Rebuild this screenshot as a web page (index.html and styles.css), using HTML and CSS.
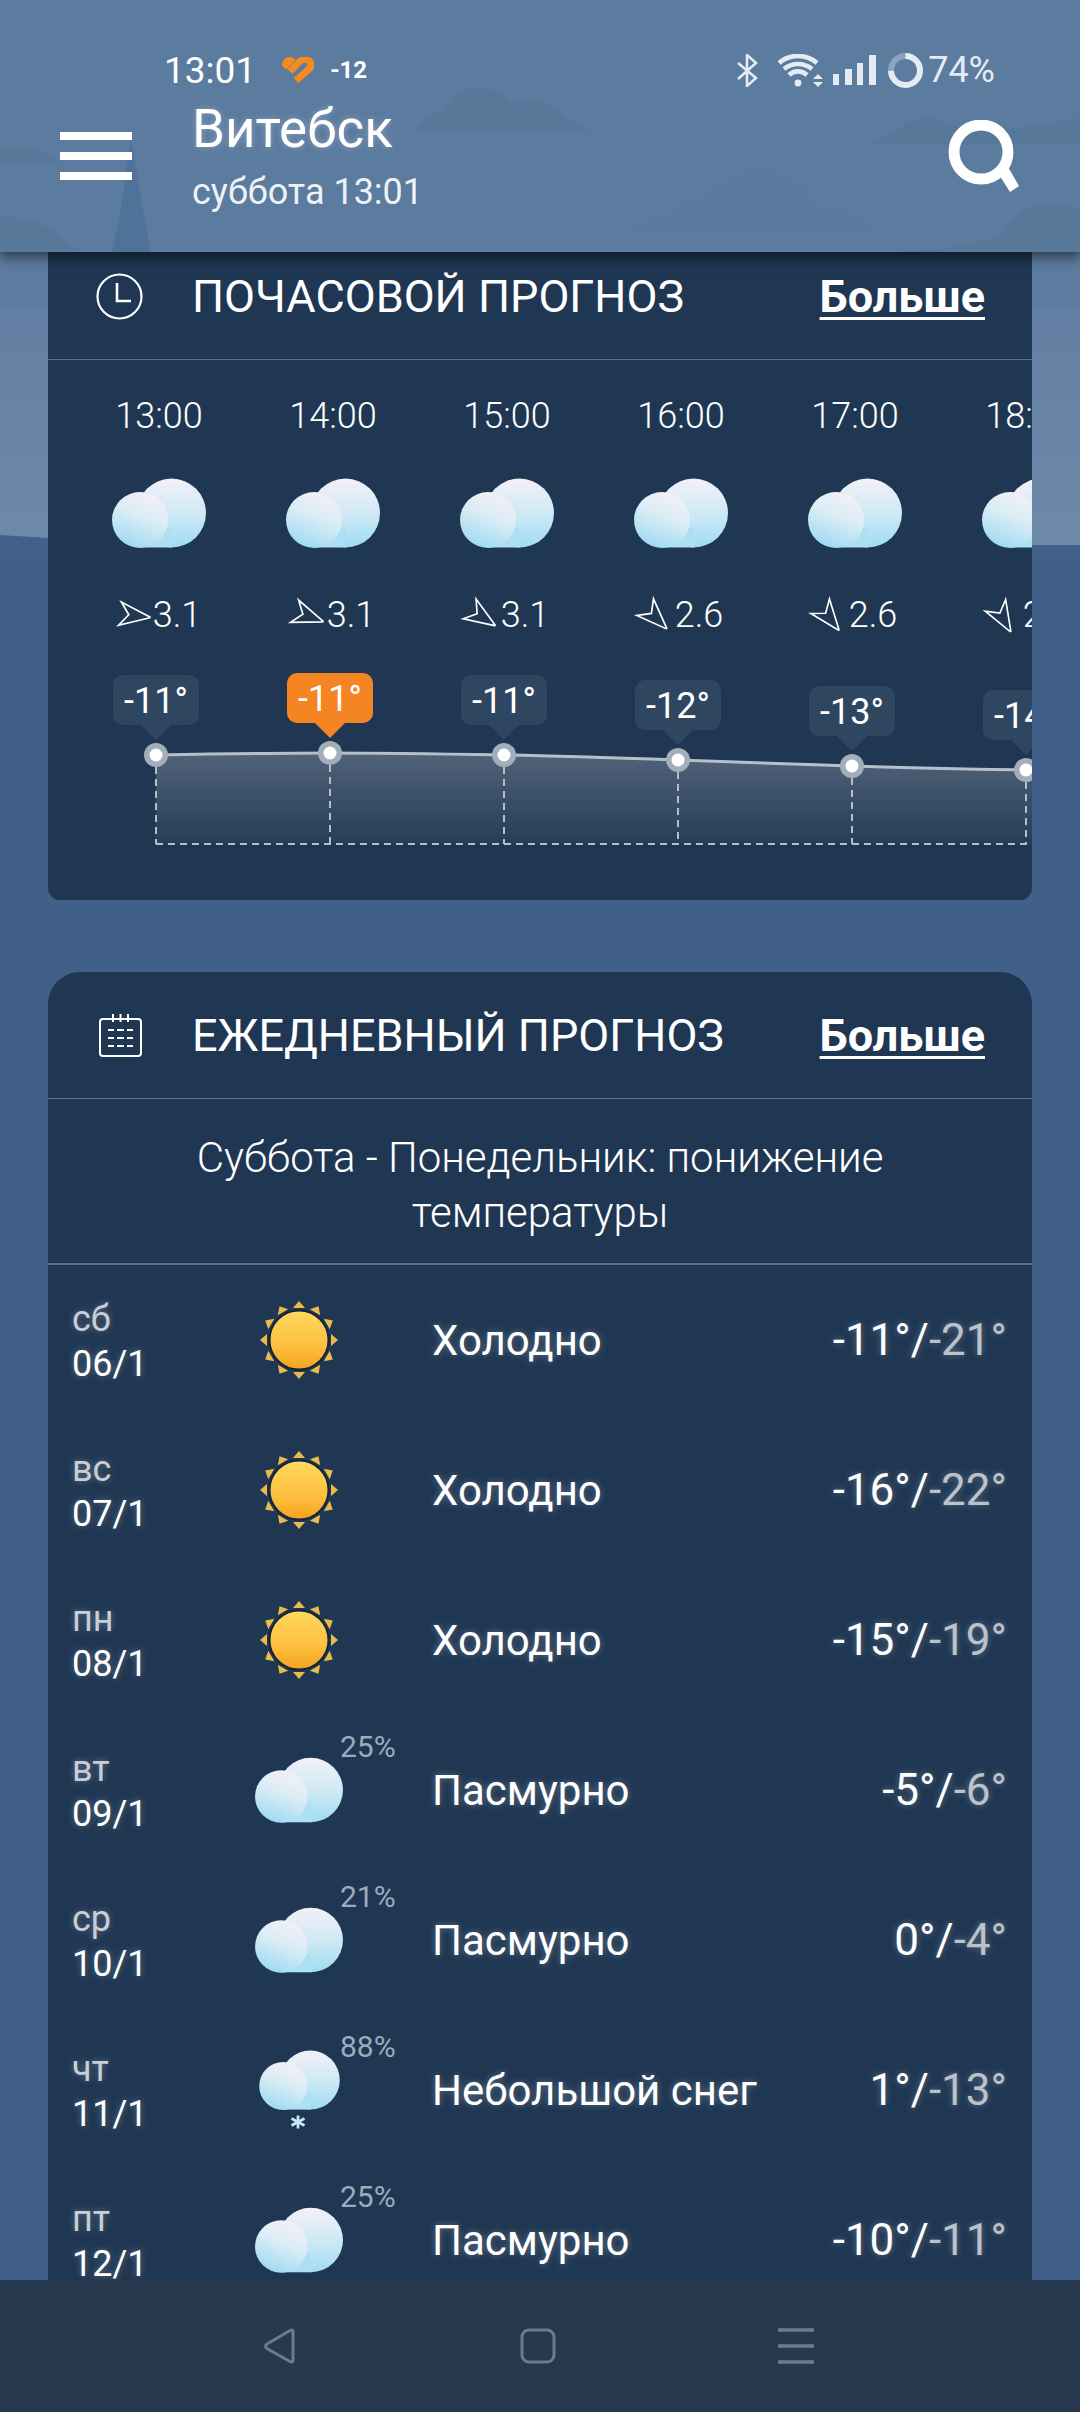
FILE: index.html
```html
<!DOCTYPE html>
<html lang="ru">
  <head>
    <meta charset="UTF-8" />
    <meta name="viewport" content="width=device-width, initial-scale=1.0" />
    <title>Витебск - прогноз</title>
    <link rel="stylesheet" href="styles.css">
  </head>
  <body>
    <svg class="svg-defs" aria-hidden="true">
      <defs>
        <linearGradient id="cloudBack" x1="0" y1="0" x2="0" y2="1">
          <stop offset="0" stop-color="#f2f1f8" />
          <stop offset="0.5" stop-color="#d0e9f5" />
          <stop offset="1" stop-color="#9fdcf2" />
        </linearGradient>
        <linearGradient id="cloudFront" x1="0.7" y1="0" x2="0.3" y2="1">
          <stop offset="0" stop-color="#f5f0f6" />
          <stop offset="0.45" stop-color="#d9ecf5" />
          <stop offset="1" stop-color="#9cdaf1" />
        </linearGradient>
        <linearGradient id="sunDisc" x1="0" y1="0" x2="0" y2="1">
          <stop offset="0" stop-color="#ffd95e" />
          <stop offset="0.6" stop-color="#fdbf3f" />
          <stop offset="1" stop-color="#f5a21f" />
        </linearGradient>
        <linearGradient id="chartFill" x1="0" y1="0" x2="0" y2="1">
          <stop offset="0" stop-color="#ffffff" stop-opacity="0.22" />
          <stop offset="1" stop-color="#ffffff" stop-opacity="0.03" />
        </linearGradient>
        <linearGradient id="skyLow" x1="0" y1="0" x2="0" y2="1">
          <stop offset="0" stop-color="#627fa3" />
          <stop offset="1" stop-color="#6f89a9" />
        </linearGradient>
        <symbol id="cloud" viewBox="0 0 94 70">
          <circle cx="59.5" cy="35" r="34.5" fill="url(#cloudBack)" />
          <rect x="28" y="50" width="32" height="19.5" fill="#aee0f3" />
          <circle cx="28" cy="42" r="28" fill="url(#cloudFront)" />
        </symbol>
        <symbol id="sun" viewBox="0 0 80 80">
          <g fill="#e9bb4c">
            <polygon points="40,1 46,8 34,8" />
            <polygon points="40,1 46,8 34,8" transform="rotate(30 40 40)" />
            <polygon points="40,1 46,8 34,8" transform="rotate(60 40 40)" />
            <polygon points="40,1 46,8 34,8" transform="rotate(90 40 40)" />
            <polygon points="40,1 46,8 34,8" transform="rotate(120 40 40)" />
            <polygon points="40,1 46,8 34,8" transform="rotate(150 40 40)" />
            <polygon points="40,1 46,8 34,8" transform="rotate(180 40 40)" />
            <polygon points="40,1 46,8 34,8" transform="rotate(210 40 40)" />
            <polygon points="40,1 46,8 34,8" transform="rotate(240 40 40)" />
            <polygon points="40,1 46,8 34,8" transform="rotate(270 40 40)" />
            <polygon points="40,1 46,8 34,8" transform="rotate(300 40 40)" />
            <polygon points="40,1 46,8 34,8" transform="rotate(330 40 40)" />
          </g>
          <circle cx="40" cy="40" r="29.5" fill="url(#sunDisc)" stroke="#14253a" stroke-width="2" />
        </symbol>
        <symbol id="wind" viewBox="-18 -18 36 36">
          <polygon points="18,0 -10,-10.6 -2,0 -10,10.6" fill="none" stroke="#fff" stroke-width="1.5" stroke-linejoin="miter" />
        </symbol>
      </defs>
    </svg>

    <div class="app">
      <svg class="scenery" viewBox="0 0 1080 560" aria-hidden="true">
        <rect width="1080" height="252" fill="#5b7b9f" />
        <rect y="252" width="1080" height="55" fill="#5c7b9e" />
        <rect y="307" width="1080" height="240" fill="url(#skyLow)" />
        <path d="M0 535 L48 538 L1030 545 L1080 545 V560 H0 Z" fill="#41608a" />
        <path d="M413 133 Q428 112 445 112 Q452 88 478 88 Q500 88 510 104 Q540 92 565 116 L590 133 Z" fill="#587899" />
        <path d="M627 230 L672 215 Q685 195 705 200 Q730 172 762 172 Q800 172 815 208 Q850 210 875 230 Z" fill="#5a799c" />
        <path d="M860 145 Q885 140 900 128 Q915 113 940 120 Q960 128 985 132 Q1040 125 1080 118 V145 Z" fill="#587899" />
        <path d="M0 163 V150 Q15 143 30 148 Q50 150 62 163 Z" fill="#587899" />
        <path d="M0 252 V217 Q50 217 76 252 Z" fill="#587899" />
        <path d="M895 252 Q960 250 1000 235 Q1020 203 1055 203 Q1070 203 1080 210 V252 Z" fill="#587899" />
        <path d="M131 140 L120 215 L112 252 H151 L144 215 Z" fill="#4f7299" />
      </svg>

      <header class="topbar">
        <div class="statusbar">
          <span class="clock">13:01</span>
          <svg class="heart" width="33" height="26" viewBox="0 0 33 26">
            <path d="M15 23.5 L29 11 Q32 4.5 25.5 2.5 Q21 1.5 18 5 L9 14.5" fill="none" stroke="#f58a1f" stroke-width="7" />
            <path d="M1 8 Q2 0 8.5 0 Q12 0 14.5 2.5 L5.5 12.5 Q2 11 1 8 Z" fill="#f58a1f" />
          </svg>
          <span class="outside-temp">-12</span>
          <div class="status-right">
            <svg width="21" height="33" viewBox="0 0 21 33">
              <path d="M1 9 L19 24 L10 32 V1 L19 9 L1 25" fill="none" stroke="#e5ebf2" stroke-width="2.6" />
            </svg>
            <svg class="wifi" width="46" height="33" viewBox="0 0 46 33">
              <g fill="none" stroke="#e5ebf2" stroke-width="4.6">
                <path d="M1 9 A29 29 0 0 1 39 9" />
                <path d="M6 15 A22 22 0 0 1 34 15" />
                <path d="M11 21 A13 13 0 0 1 29 21" />
              </g>
              <circle cx="20" cy="29" r="3.4" fill="#e5ebf2" />
              <polygon points="40,20 45,25 35,25" fill="#e5ebf2" />
              <polygon points="40,33 45,28 35,28" fill="#e5ebf2" />
            </svg>
            <svg class="signal" width="43" height="30" viewBox="0 0 43 30">
              <g fill="#e5ebf2">
                <rect y="19" width="6" height="11" />
                <rect x="12" y="14" width="7" height="16" />
                <rect x="24" y="8" width="6" height="22" />
                <rect x="36" width="7" height="30" />
              </g>
            </svg>
            <svg class="battery" width="35" height="35" viewBox="0 0 35 35">
              <circle cx="17.5" cy="17.5" r="14.5" fill="none" stroke="#8fa3bb" stroke-width="6" />
              <circle cx="17.5" cy="17.5" r="14.5" fill="none" stroke="#e5ebf2" stroke-width="6" stroke-dasharray="67.4 91.1" transform="rotate(-90 17.5 17.5)" />
            </svg>
            <span class="battery-level">74%</span>
          </div>
        </div>
        <div class="appbar">
          <div class="menu-btn"><span></span><span></span><span></span></div>
          <div class="place">
            <h1>Витебск</h1>
            <p>суббота 13:01</p>
          </div>
          <svg class="search-btn" width="72" height="72" viewBox="0 0 72 72">
            <circle cx="33" cy="32" r="27" fill="none" stroke="#fff" stroke-width="11" />
            <path d="M50 53 L62 72 L71 66 L60 47 Z" fill="#fff" />
          </svg>
        </div>
      </header>

      <main class="content">
        <section class="card card-hourly">
          <div class="card-head">
            <div class="card-icon">
              <svg width="47" height="47" viewBox="0 0 47 47">
                <circle cx="23.5" cy="23.5" r="22" fill="none" stroke="#fff" stroke-width="2.2" />
                <path d="M21 10 V28 H35" fill="none" stroke="#fff" stroke-width="2.6" />
              </svg>
            </div>
            <h2>ПОЧАСОВОЙ ПРОГНОЗ</h2>
            <a class="more">Больше</a>
          </div>
          <div class="hours">
            <div class="hour-cols">
              <div class="hour">
                <div class="hour-time">13:00</div>
                <svg class="hour-cloud"><use href="#cloud" /></svg>
                <div class="hour-wind"><svg class="wind-arrow" style="transform: rotate(7deg)"><use href="#wind" /></svg><span>3.1</span></div>
              </div>
              <div class="hour">
                <div class="hour-time">14:00</div>
                <svg class="hour-cloud"><use href="#cloud" /></svg>
                <div class="hour-wind"><svg class="wind-arrow" style="transform: rotate(20deg)"><use href="#wind" /></svg><span>3.1</span></div>
              </div>
              <div class="hour">
                <div class="hour-time">15:00</div>
                <svg class="hour-cloud"><use href="#cloud" /></svg>
                <div class="hour-wind"><svg class="wind-arrow" style="transform: rotate(33deg)"><use href="#wind" /></svg><span>3.1</span></div>
              </div>
              <div class="hour">
                <div class="hour-time">16:00</div>
                <svg class="hour-cloud"><use href="#cloud" /></svg>
                <div class="hour-wind"><svg class="wind-arrow" style="transform: rotate(45deg)"><use href="#wind" /></svg><span>2.6</span></div>
              </div>
              <div class="hour">
                <div class="hour-time">17:00</div>
                <svg class="hour-cloud"><use href="#cloud" /></svg>
                <div class="hour-wind"><svg class="wind-arrow" style="transform: rotate(52deg)"><use href="#wind" /></svg><span>2.6</span></div>
              </div>
              <div class="hour">
                <div class="hour-time">18:00</div>
                <svg class="hour-cloud"><use href="#cloud" /></svg>
                <div class="hour-wind"><svg class="wind-arrow" style="transform: rotate(60deg)"><use href="#wind" /></svg><span>2.6</span></div>
              </div>
            </div>
            <div class="chart">
              <svg class="chart-lines" width="1044" height="180" viewBox="0 0 1044 180">
                <path d="M84 85 C142 84 200 83 258 83 C316 83 374 84 432 85 C490 86 548 88 606 90 C664 92 722 94 780 96 C838 98 896 99 954 100 L1044 101 V174 H84 Z" fill="url(#chartFill)" />
                <path d="M84 85 C142 84 200 83 258 83 C316 83 374 84 432 85 C490 86 548 88 606 90 C664 92 722 94 780 96 C838 98 896 99 954 100 L1044 101" fill="none" stroke="#b6c0cc" stroke-width="3" />
                <g fill="none" stroke="#b5bfca" stroke-width="2" stroke-dasharray="7 5">
                  <path d="M84 174 H1044" />
                  <path d="M84 85 V174" />
                  <path d="M258 83 V174" />
                  <path d="M432 85 V174" />
                  <path d="M606 90 V174" />
                  <path d="M780 96 V174" />
                  <path d="M954 100 V174" />
                </g>
                <g fill="#a3aebb">
                  <circle cx="84" cy="85" r="12" />
                  <circle cx="258" cy="83" r="12" />
                  <circle cx="432" cy="85" r="12" />
                  <circle cx="606" cy="90" r="12" />
                  <circle cx="780" cy="96" r="12" />
                  <circle cx="954" cy="100" r="12" />
                </g>
                <g fill="#fff">
                  <circle cx="84" cy="85" r="6.5" />
                  <circle cx="258" cy="83" r="6.5" />
                  <circle cx="432" cy="85" r="6.5" />
                  <circle cx="606" cy="90" r="6.5" />
                  <circle cx="780" cy="96" r="6.5" />
                  <circle cx="954" cy="100" r="6.5" />
                </g>
              </svg>
              <div class="chart-temps">
                <div class="temp-col"><div class="temp-pin" style="margin-top: 5px">-11°</div></div>
                <div class="temp-col"><div class="temp-pin temp-pin-now" style="margin-top: 3px">-11°</div></div>
                <div class="temp-col"><div class="temp-pin" style="margin-top: 5px">-11°</div></div>
                <div class="temp-col"><div class="temp-pin" style="margin-top: 10px">-12°</div></div>
                <div class="temp-col"><div class="temp-pin" style="margin-top: 16px">-13°</div></div>
                <div class="temp-col"><div class="temp-pin" style="margin-top: 20px">-14°</div></div>
              </div>
            </div>
          </div>
        </section>

        <section class="card card-daily">
          <div class="card-head">
            <div class="card-icon">
              <svg width="43" height="43" viewBox="0 0 43 43">
                <rect x="1" y="5" width="41" height="37" rx="3" fill="none" stroke="#fff" stroke-width="2" />
                <g stroke="#fff" stroke-width="2" fill="none">
                  <path d="M14 0 V8 M21.5 0 V8 M29 0 V8" />
                  <path d="M9 16 H15 M18 16 H25 M28 16 H34" />
                  <path d="M9 24 H15 M18 24 H25 M28 24 H34" />
                  <path d="M9 32 H15 M18 32 H25 M28 32 H34" />
                </g>
              </svg>
            </div>
            <h2>ЕЖЕДНЕВНЫЙ ПРОГНОЗ</h2>
            <a class="more">Больше</a>
          </div>
          <p class="summary">Суббота - Понедельник: понижение температуры</p>

          <div class="day-row">
            <div class="day-date"><span class="weekday">сб</span><span>06/1</span></div>
            <div class="day-icon"><svg class="icon-sun"><use href="#sun" /></svg></div>
            <div class="day-desc">Холодно</div>
            <div class="day-temp">-11°/<span class="low">-21°</span></div>
          </div>
          <div class="day-row">
            <div class="day-date"><span class="weekday">вс</span><span>07/1</span></div>
            <div class="day-icon"><svg class="icon-sun"><use href="#sun" /></svg></div>
            <div class="day-desc">Холодно</div>
            <div class="day-temp">-16°/<span class="low">-22°</span></div>
          </div>
          <div class="day-row">
            <div class="day-date"><span class="weekday">пн</span><span>08/1</span></div>
            <div class="day-icon"><svg class="icon-sun"><use href="#sun" /></svg></div>
            <div class="day-desc">Холодно</div>
            <div class="day-temp">-15°/<span class="low">-19°</span></div>
          </div>
          <div class="day-row">
            <div class="day-date"><span class="weekday">вт</span><span>09/1</span></div>
            <div class="day-icon"><svg class="icon-cloud"><use href="#cloud" /></svg><span class="chance">25%</span></div>
            <div class="day-desc">Пасмурно</div>
            <div class="day-temp">-5°/<span class="low">-6°</span></div>
          </div>
          <div class="day-row">
            <div class="day-date"><span class="weekday">ср</span><span>10/1</span></div>
            <div class="day-icon"><svg class="icon-cloud"><use href="#cloud" /></svg><span class="chance">21%</span></div>
            <div class="day-desc">Пасмурно</div>
            <div class="day-temp">0°/<span class="low">-4°</span></div>
          </div>
          <div class="day-row">
            <div class="day-date"><span class="weekday">чт</span><span>11/1</span></div>
            <div class="day-icon">
              <svg class="icon-snow" viewBox="0 0 81 80">
                <use href="#cloud" width="81" height="60" />
                <g stroke="#c3e8f8" stroke-width="2.8" fill="none">
                  <path d="M39 65.5 V78.5" />
                  <path d="M32.5 68.5 L45.5 75.5" />
                  <path d="M45.5 68.5 L32.5 75.5" />
                </g>
              </svg>
              <span class="chance">88%</span>
            </div>
            <div class="day-desc">Небольшой снег</div>
            <div class="day-temp">1°/<span class="low">-13°</span></div>
          </div>
          <div class="day-row">
            <div class="day-date"><span class="weekday">пт</span><span>12/1</span></div>
            <div class="day-icon"><svg class="icon-cloud"><use href="#cloud" /></svg><span class="chance">25%</span></div>
            <div class="day-desc">Пасмурно</div>
            <div class="day-temp">-10°/<span class="low">-11°</span></div>
          </div>
        </section>
      </main>

      <nav class="navbar">
        <svg width="36" height="36" viewBox="0 0 36 36">
          <path d="M31 4 Q31 1 28 2.5 L5 16 Q2 18 5 20.5 L28 33.5 Q31 35 31 32 Z" fill="none" stroke="#6d7b8c" stroke-width="3" />
        </svg>
        <svg width="36" height="36" viewBox="0 0 36 36">
          <rect x="2" y="2" width="32" height="32" rx="7" fill="none" stroke="#6d7b8c" stroke-width="3" />
        </svg>
        <svg width="36" height="36" viewBox="0 0 36 36">
          <path d="M0 2 H36 M0 18 H36 M0 34 H36" fill="none" stroke="#6d7b8c" stroke-width="3.5" />
        </svg>
      </nav>
    </div>
  </body>
</html>
```

FILE: styles.css
```css
* {
  box-sizing: border-box;
  margin: 0;
  padding: 0;
}

body {
  font-family: Roboto, "Noto Sans", sans-serif;
  color: #fff;
  background-color: #3f5d84;
}

.svg-defs {
  position: absolute;
  width: 0;
  height: 0;
}

.app {
  position: relative;
  display: flex;
  flex-direction: column;
  width: 1080px;
  height: 2412px;
  overflow: hidden;
  background-color: #40608a;
}

.scenery {
  position: absolute;
  top: 0;
  left: 0;
  width: 1080px;
  height: 560px;
}

/* header */
.topbar {
  position: relative;
  z-index: 2;
  flex: none;
  height: 252px;
  box-shadow: 0 5px 12px rgba(0, 0, 0, 0.55);
}

.statusbar {
  display: flex;
  align-items: center;
  height: 48px;
  margin-top: 46px;
  padding: 0 85px 0 164px;
}

.clock {
  font-size: 37px;
}

.heart {
  margin-left: 25px;
}

.outside-temp {
  margin-left: 16px;
  font-size: 24px;
  font-weight: 700;
}

.status-right {
  display: flex;
  align-items: center;
  margin-left: auto;
  color: #e5ebf2;
}

.wifi {
  margin-left: 20px;
}

.signal {
  margin-left: 9px;
}

.battery {
  margin-left: 12px;
}

.battery-level {
  margin-left: 5px;
  font-size: 36px;
}

.appbar {
  display: flex;
  align-items: center;
  height: 124px;
  padding: 0 60px 0 60px;
}

.menu-btn {
  display: flex;
  flex-direction: column;
  justify-content: space-between;
  width: 72px;
  height: 48px;
  margin-right: 60px;
}

.menu-btn span {
  height: 8px;
  background-color: #fff;
}

.place {
  flex: 1;
}

.place h1 {
  font-size: 53px;
  font-weight: 400;
  line-height: 62px;
  text-shadow: 0 0 6px rgba(255, 255, 255, 0.3);
}

.place p {
  margin-top: 10px;
  font-size: 36px;
  line-height: 44px;
  color: #eef2f6;
}

/* cards */
.content {
  position: relative;
  z-index: 1;
  flex: 1;
  min-height: 0;
  padding: 0 48px;
  overflow: hidden;
}

.card {
  background-color: #1f3753;
  overflow: hidden;
}

.card-hourly {
  margin-top: -19px;
  border-radius: 12px;
}

.card-daily {
  margin-top: 72px;
  border-radius: 32px 32px 0 0;
}

.card-head {
  display: flex;
  align-items: center;
  height: 127px;
  padding: 0 47px 0 48px;
  border-bottom: 1px solid #56718f;
}

.card-icon {
  display: flex;
  width: 96px;
}

.card-daily .card-icon {
  padding-left: 3px;
}

.card-head h2 {
  flex: 1;
  font-size: 45px;
  font-weight: 400;
}

.more {
  font-size: 45px;
  font-weight: 700;
  text-decoration: underline;
  text-decoration-thickness: 3px;
  text-underline-offset: 5px;
}

/* hourly */
.hours {
  padding: 34px 0 50px 24px;
}

.hour-cols {
  display: flex;
  width: 1044px;
}

.hour {
  display: flex;
  flex: none;
  flex-direction: column;
  align-items: center;
  width: 174px;
}

.hour-time {
  font-size: 36px;
  font-weight: 300;
  line-height: 44px;
}

.hour-cloud {
  width: 94px;
  height: 70px;
  margin-top: 40px;
}

.hour-wind {
  display: flex;
  align-items: center;
  height: 44px;
  margin-top: 45px;
  padding-right: 6px;
  font-size: 36px;
  font-weight: 300;
}

.wind-arrow {
  width: 40px;
  height: 40px;
  margin-right: 2px;
}

.chart {
  position: relative;
  width: 1044px;
  height: 180px;
  margin-top: 33px;
}

.chart-lines {
  position: absolute;
  top: 0;
  left: 0;
}

.chart-temps {
  position: relative;
  display: flex;
}

.temp-col {
  display: flex;
  flex: none;
  justify-content: center;
  width: 174px;
  padding-right: 6px;
}

.temp-pin {
  position: relative;
  width: 86px;
  height: 50px;
  border-radius: 10px;
  font-size: 36px;
  line-height: 52px;
  text-align: center;
  background-color: #2f4661;
}

.temp-pin::after {
  content: "";
  position: absolute;
  top: 50px;
  left: 28px;
  border-top: 15px solid #2f4661;
  border-right: 15px solid transparent;
  border-left: 15px solid transparent;
}

.temp-pin-now {
  background-color: #f58423;
}

.temp-pin-now::after {
  border-top-color: #f58423;
}

/* daily */
.summary {
  padding: 31px 100px 23px;
  border-bottom: 2px solid #56718f;
  font-size: 42px;
  font-weight: 300;
  line-height: 55px;
  text-align: center;
}

.day-row {
  display: grid;
  grid-template-columns: 150px 154px 1fr auto;
  align-items: center;
  height: 150px;
  padding: 0 25px 0 24px;
  text-shadow: 0 0 7px rgba(255, 255, 255, 0.3);
}

.day-date {
  display: flex;
  flex-direction: column;
  margin-top: 3px;
  font-size: 36px;
  line-height: 45px;
}

.weekday {
  color: #c9ced6;
}

.day-icon {
  position: relative;
  display: flex;
  justify-content: center;
  align-items: center;
}

.icon-sun {
  width: 80px;
  height: 80px;
}

.icon-cloud {
  width: 88px;
  height: 66px;
}

.icon-snow {
  width: 81px;
  height: 80px;
}

.chance {
  position: absolute;
  top: calc(50% - 60px);
  left: 118px;
  font-size: 30px;
  line-height: 34px;
  color: #9dabbc;
  text-shadow: none;
}

.day-desc {
  padding-left: 56px;
  font-size: 42px;
}

.day-temp {
  font-size: 44px;
}

.low {
  color: #bcc2ca;
}

/* system nav */
.navbar {
  position: relative;
  z-index: 2;
  display: flex;
  flex: none;
  justify-content: center;
  align-items: center;
  gap: 222px;
  height: 132px;
  padding-right: 4px;
  background-color: #27384f;
}
```
